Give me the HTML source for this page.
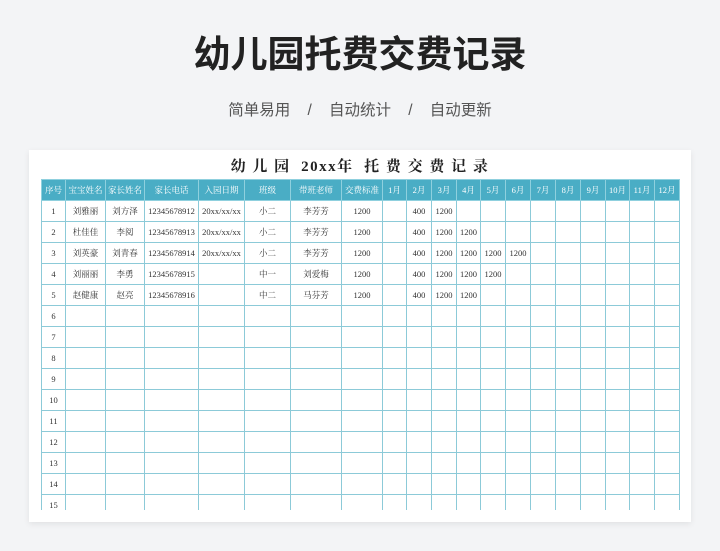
<!DOCTYPE html>
<html><head><meta charset="utf-8"><style>
*{margin:0;padding:0;box-sizing:border-box}
body{width:720px;height:551px;background:#f3f4f6;position:relative;overflow:hidden;font-family:"Liberation Sans","Noto Sans CJK SC",sans-serif}
.t1{position:absolute;top:30px;left:0;width:720px;text-align:center;font-size:37px;font-weight:bold;color:#222;line-height:50px}
.t2{position:absolute;top:100px;left:0;width:720px;text-align:center;font-size:15.5px;color:#555;line-height:22px;white-space:pre}
.card{position:absolute;left:29px;top:150px;width:662px;height:372px;background:#fff;box-shadow:0 2px 6px rgba(0,0,0,.08)}
.ct{position:absolute;top:157px;left:29px;width:662px;text-align:center;font-family:"Liberation Serif","Noto Serif CJK SC",serif;font-weight:bold;font-size:15px;color:#222;line-height:20px;white-space:pre;letter-spacing:1.5px}
.wrap{position:absolute;left:41px;top:179px;width:639px;height:331px;overflow:hidden}
table{border-collapse:collapse;table-layout:fixed;font-family:"Liberation Serif","Noto Serif CJK SC",serif;font-size:8.5px;color:#333}
td,th{height:21px;border:1px solid #8ccad8;text-align:center;white-space:nowrap;overflow:hidden;padding:0}
th{background:#4aadc5;color:#fff;font-weight:normal;border-color:#8fd0de}
</style></head><body>
<div class="t1">幼儿园托费交费记录</div>
<div class="t2">简单易用    /    自动统计    /    自动更新</div>
<div class="card"></div>
<div class="ct">幼 儿 园  20xx年  托 费 交 费 记 录</div>
<div class="wrap"><table>
<colgroup><col style="width:24px"><col style="width:40px"><col style="width:39px"><col style="width:54px"><col style="width:46px"><col style="width:46px"><col style="width:51px"><col style="width:41px"><col style="width:24px"><col style="width:25px"><col style="width:25px"><col style="width:24px"><col style="width:25px"><col style="width:25px"><col style="width:25px"><col style="width:25px"><col style="width:25px"><col style="width:24px"><col style="width:25px"><col style="width:25px"></colgroup>
<tr><th>序号</th><th>宝宝姓名</th><th>家长姓名</th><th>家长电话</th><th>入园日期</th><th>班级</th><th>带班老师</th><th>交费标准</th><th>1月</th><th>2月</th><th>3月</th><th>4月</th><th>5月</th><th>6月</th><th>7月</th><th>8月</th><th>9月</th><th>10月</th><th>11月</th><th>12月</th></tr>
<tr><td>1</td><td>刘雅丽</td><td>刘方泽</td><td>12345678912</td><td>20xx/xx/xx</td><td>小二</td><td>李芳芳</td><td>1200</td><td></td><td>400</td><td>1200</td><td></td><td></td><td></td><td></td><td></td><td></td><td></td><td></td><td></td></tr>
<tr><td>2</td><td>杜佳佳</td><td>李阅</td><td>12345678913</td><td>20xx/xx/xx</td><td>小二</td><td>李芳芳</td><td>1200</td><td></td><td>400</td><td>1200</td><td>1200</td><td></td><td></td><td></td><td></td><td></td><td></td><td></td><td></td></tr>
<tr><td>3</td><td>刘英豪</td><td>刘青春</td><td>12345678914</td><td>20xx/xx/xx</td><td>小二</td><td>李芳芳</td><td>1200</td><td></td><td>400</td><td>1200</td><td>1200</td><td>1200</td><td>1200</td><td></td><td></td><td></td><td></td><td></td><td></td></tr>
<tr><td>4</td><td>刘丽丽</td><td>李勇</td><td>12345678915</td><td></td><td>中一</td><td>刘爱梅</td><td>1200</td><td></td><td>400</td><td>1200</td><td>1200</td><td>1200</td><td></td><td></td><td></td><td></td><td></td><td></td><td></td></tr>
<tr><td>5</td><td>赵健康</td><td>赵亮</td><td>12345678916</td><td></td><td>中二</td><td>马芬芳</td><td>1200</td><td></td><td>400</td><td>1200</td><td>1200</td><td></td><td></td><td></td><td></td><td></td><td></td><td></td><td></td></tr>
<tr><td>6</td><td></td><td></td><td></td><td></td><td></td><td></td><td></td><td></td><td></td><td></td><td></td><td></td><td></td><td></td><td></td><td></td><td></td><td></td><td></td></tr>
<tr><td>7</td><td></td><td></td><td></td><td></td><td></td><td></td><td></td><td></td><td></td><td></td><td></td><td></td><td></td><td></td><td></td><td></td><td></td><td></td><td></td></tr>
<tr><td>8</td><td></td><td></td><td></td><td></td><td></td><td></td><td></td><td></td><td></td><td></td><td></td><td></td><td></td><td></td><td></td><td></td><td></td><td></td><td></td></tr>
<tr><td>9</td><td></td><td></td><td></td><td></td><td></td><td></td><td></td><td></td><td></td><td></td><td></td><td></td><td></td><td></td><td></td><td></td><td></td><td></td><td></td></tr>
<tr><td>10</td><td></td><td></td><td></td><td></td><td></td><td></td><td></td><td></td><td></td><td></td><td></td><td></td><td></td><td></td><td></td><td></td><td></td><td></td><td></td></tr>
<tr><td>11</td><td></td><td></td><td></td><td></td><td></td><td></td><td></td><td></td><td></td><td></td><td></td><td></td><td></td><td></td><td></td><td></td><td></td><td></td><td></td></tr>
<tr><td>12</td><td></td><td></td><td></td><td></td><td></td><td></td><td></td><td></td><td></td><td></td><td></td><td></td><td></td><td></td><td></td><td></td><td></td><td></td><td></td></tr>
<tr><td>13</td><td></td><td></td><td></td><td></td><td></td><td></td><td></td><td></td><td></td><td></td><td></td><td></td><td></td><td></td><td></td><td></td><td></td><td></td><td></td></tr>
<tr><td>14</td><td></td><td></td><td></td><td></td><td></td><td></td><td></td><td></td><td></td><td></td><td></td><td></td><td></td><td></td><td></td><td></td><td></td><td></td><td></td></tr>
<tr><td>15</td><td></td><td></td><td></td><td></td><td></td><td></td><td></td><td></td><td></td><td></td><td></td><td></td><td></td><td></td><td></td><td></td><td></td><td></td><td></td></tr>
</table></div>
</body></html>
